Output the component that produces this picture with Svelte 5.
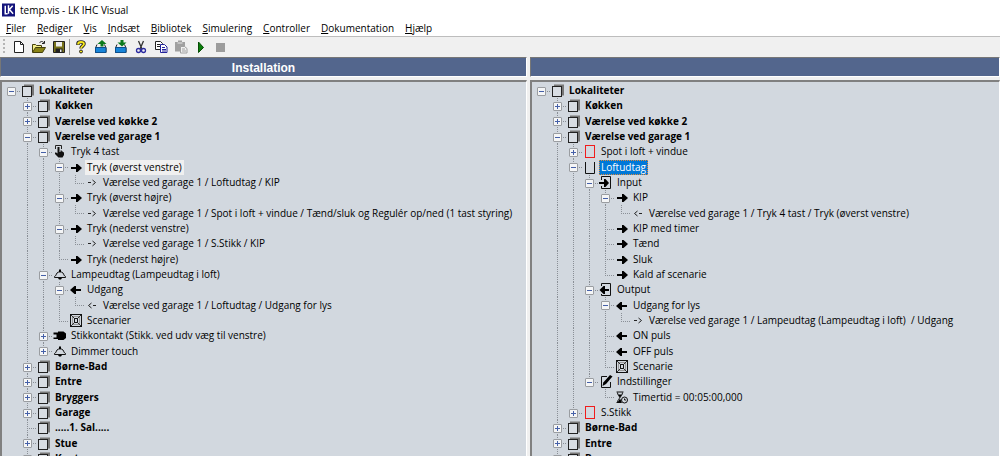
<script lang="ts">
  type TreeNode = {
    label: string;
    icon: string;
    closed?: boolean;
    mark?: 'linked' | 'selected';
    children?: TreeNode[];
  };

  type Row = TreeNode & { depth: number; guides: boolean[]; last: boolean };

  const menus = [
    'Filer',
    'Rediger',
    'Vis',
    'Indsæt',
    'Bibliotek',
    'Simulering',
    'Controller',
    'Dokumentation',
    'Hjælp',
  ];

  const tools = ['new', 'open', 'save', '|', 'help', 'upload', 'download', 'cut', 'copy', 'paste', 'play', 'stop'];

  const room = (label: string, children?: TreeNode[]): TreeNode => ({
    label,
    icon: 'room',
    closed: !children,
    children,
  });

  const installation: TreeNode = room('Lokaliteter', [
    room('Køkken'),
    room('Værelse ved køkke 2'),
    room('Værelse ved garage 1', [
      {
        label: 'Tryk 4 tast',
        icon: 'hand',
        children: [
          {
            label: 'Tryk (øverst venstre)',
            icon: 'right',
            mark: 'linked',
            children: [{ label: 'Værelse ved garage 1 / Loftudtag / KIP', icon: 'linkRight' }],
          },
          {
            label: 'Tryk (øverst højre)',
            icon: 'right',
            children: [
              {
                label: 'Værelse ved garage 1 / Spot i loft + vindue / Tænd/sluk og Regulér op/ned (1 tast styring)',
                icon: 'linkRight',
              },
            ],
          },
          {
            label: 'Tryk (nederst venstre)',
            icon: 'right',
            children: [{ label: 'Værelse ved garage 1 / S.Stikk / KIP', icon: 'linkRight' }],
          },
          { label: 'Tryk (nederst højre)', icon: 'right' },
        ],
      },
      {
        label: 'Lampeudtag (Lampeudtag i loft)',
        icon: 'lamp',
        children: [
          {
            label: 'Udgang',
            icon: 'left',
            children: [{ label: 'Værelse ved garage 1 / Loftudtag / Udgang for lys', icon: 'linkLeft' }],
          },
          { label: 'Scenarier', icon: 'scene' },
        ],
      },
      { label: 'Stikkontakt (Stikk. ved udv væg til venstre)', icon: 'plug', closed: true },
      { label: 'Dimmer touch', icon: 'lamp', closed: true },
    ]),
    room('Børne-Bad'),
    room('Entre'),
    room('Bryggers'),
    room('Garage'),
    { label: '.....1. Sal.....', icon: 'room' },
    room('Stue'),
    room('Kontor'),
  ]);

  const functions: TreeNode = room('Lokaliteter', [
    room('Køkken'),
    room('Værelse ved køkke 2'),
    room('Værelse ved garage 1', [
      { label: 'Spot i loft + vindue', icon: 'block', closed: true },
      {
        label: 'Loftudtag',
        icon: 'openBlock',
        mark: 'selected',
        children: [
          {
            label: 'Input',
            icon: 'input',
            children: [
              {
                label: 'KIP',
                icon: 'right',
                children: [
                  { label: 'Værelse ved garage 1 / Tryk 4 tast / Tryk (øverst venstre)', icon: 'linkLeft' },
                ],
              },
              { label: 'KIP med timer', icon: 'right' },
              { label: 'Tænd', icon: 'right' },
              { label: 'Sluk', icon: 'right' },
              { label: 'Kald af scenarie', icon: 'right' },
            ],
          },
          {
            label: 'Output',
            icon: 'output',
            children: [
              {
                label: 'Udgang for lys',
                icon: 'left',
                children: [
                  {
                    label: 'Værelse ved garage 1 / Lampeudtag (Lampeudtag i loft)  / Udgang',
                    icon: 'linkRight',
                  },
                ],
              },
              { label: 'ON puls', icon: 'left' },
              { label: 'OFF puls', icon: 'left' },
              { label: 'Scenarie', icon: 'scene' },
            ],
          },
          {
            label: 'Indstillinger',
            icon: 'settings',
            children: [{ label: 'Timertid = 00:05:00,000', icon: 'timer' }],
          },
        ],
      },
      { label: 'S.Stikk', icon: 'block', closed: true },
    ]),
    room('Børne-Bad'),
    room('Entre'),
    room('Bryggers'),
  ]);

  // Flatten the tree to rows; guides[i] tells if the line in column i runs on below
  const flatten = (node: TreeNode, depth = 0, guides: boolean[] = [], last = true): Row[] => {
    const rows: Row[] = [{ ...node, depth, guides, last }];
    const kids = node.children ?? [];
    kids.forEach((kid, i) => {
      rows.push(...flatten(kid, depth + 1, [...guides, !last], i === kids.length - 1));
    });
    return rows;
  };

  const panes = [
    { title: 'Installation', rows: flatten(installation) },
    { title: '', rows: flatten(functions) },
  ];
</script>

{#snippet treeIcon(name: string)}
  <svg class="icon" viewBox="0 0 16 15" aria-hidden="true">
    {#if name === 'room'}
      <path d="M4 1.500h10v11h-2V4H4z" fill="#777" />
      <rect x="2.500" y="3.500" width="9" height="10" fill="#d8dde3" stroke="#222" />
    {:else if name === 'hand'}
      <path d="M3.500 5V1.500h6V5" fill="none" stroke="#222" />
      <path d="M5.500 3h2v5h1V6.500h1.300v1h1.200v.7h1V11l-1.500 2.500h-4L3 10V8.500h1.200l1.300 1z" fill="#111" />
    {:else if name === 'right'}
      <path d="M3 7h5V4h1.500L14 8l-4.500 4H8V9H3z" />
    {:else if name === 'left'}
      <path d="M13 7H8V4H6.500L2 8l4.500 4H8V9h5z" />
    {:else if name === 'linkRight'}
      <path d="M4 7.500h3M8.500 5l3 2.500-3 2.500" fill="none" stroke="#222" />
    {:else if name === 'linkLeft'}
      <path d="M12 7.500H9M7.500 5l-3 2.500 3 2.500" fill="none" stroke="#222" />
    {:else if name === 'lamp'}
      <path d="M2.500 10.500V9.500C4 9 4 7.500 5 6c1.200-1.500 4.800-1.500 6 0 1 1.500 1 3 2.500 3.500v1z" fill="none" stroke="#111" />
      <path d="M7 2.500h2V5H7zM6 11h4l-1 1.500H7z" />
    {:else if name === 'plug'}
      <path d="M6 3.500h5.500L14 5.500v4.500l-2.500 2H6v-1H4.500V4.500H6zM1.500 4.500H5V6.500H1.500zM1.500 9.500H5V11H1.500z" />
    {:else if name === 'scene'}
      <rect x="2.500" y="1.500" width="11" height="12" fill="none" stroke="#111" />
      <rect x="4.500" y="3.500" width="7" height="8" fill="none" stroke="#999" />
      <rect x="6.500" y="5.500" width="3" height="4" fill="none" stroke="#111" />
      <path d="M3 2l3.500 3.500M13 2L9.500 5.500M3 13l3.500-3.500M13 13L9.500 9.500" stroke="#333" />
    {:else if name === 'block'}
      <rect x="3.500" y="1.500" width="9" height="12" fill="none" stroke="#f01c1c" />
    {:else if name === 'openBlock'}
      <path d="M3.500 2v11.500h9V2" fill="none" stroke="#111" />
    {:else if name === 'input'}
      <path d="M3.500 5V1.500h9v12h-9V11" fill="none" stroke="#111" />
      <path d="M1 7h5V4h1.500L11 8l-3.500 4H6V9H1z" />
    {:else if name === 'output'}
      <path d="M3.500 4V1.500h9v12h-9V12" fill="none" stroke="#111" />
      <path d="M11 7H7V4H5.500L1.500 8l4 4H7V9h4z" />
    {:else if name === 'settings'}
      <path d="M9 2.500H3.500v11h9V8" fill="none" stroke="#111" />
      <path d="M12 1l2.500 1.500L8 10l-3.500 2 .8-3.500z" />
    {:else if name === 'timer'}
      <path d="M2.500 2h7M2.500 12.500h5M3.500 2.500c0 3 2 3 2 5s-2 2-2 5M8.500 2.500c0 3-2 3-2 5" fill="none" stroke="#111" />
      <path d="M4 4.500h4L6 7.500zM6 8.500l2 4H3.500z" />
      <circle cx="10.500" cy="10" r="3" fill="#d2d8df" stroke="#111" />
      <path d="M10.500 8.500V10h1.500" fill="none" stroke="#111" />
    {/if}
  </svg>
{/snippet}

{#snippet toolIcon(name: string)}
  <svg class="tool-icon" viewBox="0 0 16 16" aria-hidden="true">
    {#if name === 'new'}
      <path d="M3.500 2.500h6l3 3v8h-9z" fill="#fff" stroke="#222" />
      <path d="M9.500 2.500v3h3" fill="none" stroke="#222" />
    {:else if name === 'open'}
      <path d="M1.500 13V5.500h3l1 1h5V9" fill="#f3ee8a" stroke="#44400c" />
      <path d="M1.500 13.500l3-5h10l-3 5z" fill="#8a8416" stroke="#44400c" />
      <path d="M8.500 4c1-2 3.500-2 4.500 0M13.500 2v2.500H11" fill="none" stroke="#222" />
    {:else if name === 'save'}
      <path d="M2.500 2.500h11v11h-11z" fill="#77721a" stroke="#222" />
      <path d="M5 3h6v4.500H5z" fill="#eee" />
      <path d="M4.500 9.500h7V13h-7z" fill="#222" />
      <path d="M9 10.500h1.500V13H9z" fill="#eee" />
    {:else if name === 'help'}
      <path d="M5 6V4.500C5 3 6.500 3 8 3s3 .5 3 2-3 2.500-3 4.500" fill="none" stroke="#222" stroke-width="3.500" />
      <path d="M5 5.500C5 3.500 6.500 3 8 3s3 .5 3 2-3 2.500-3 4.500" fill="none" stroke="#f4e51b" stroke-width="1.800" />
      <circle cx="8" cy="12.500" r="1.500" fill="#f4e51b" stroke="#222" />
    {:else if name === 'upload' || name === 'download'}
      <path d="M4 5.500L2.500 9v4.500h10.500V9L11.500 5.500" fill="none" stroke="#222" />
      <path d="M2.500 8.500h10.500v5H2.500z" fill="#1684d8" stroke="#0d4f8c" />
      {#if name === 'upload'}
        <path d="M9 1l4.500 4h-3v2.500h-3V5h-3z" fill="#0b7a1d" />
      {:else}
        <path d="M7.500 1h3v2.500h3L9 7.500l-4.500-4h3z" fill="#0b7a1d" />
      {/if}
    {:else if name === 'cut'}
      <path d="M5.500 2l3.500 8M10.500 2L7 10" stroke="#333" stroke-width="1.300" />
      <circle cx="5.500" cy="11.500" r="2" fill="none" stroke="#2c2ca0" stroke-width="1.300" />
      <circle cx="10.500" cy="11.500" r="2" fill="none" stroke="#2c2ca0" stroke-width="1.300" />
    {:else if name === 'copy'}
      <path d="M2.500 2.500h5l2 2v6h-7z" fill="#fff" stroke="#222" />
      <path d="M4 5.500h3M4 7.500h3" stroke="#222" />
      <path d="M7.500 5.500h4l2.500 2.500v5.500H7.500z" fill="#fff" stroke="#22229a" />
      <path d="M9 8.500h3M9 10.500h4M9 12h4" stroke="#22229a" />
    {:else if name === 'paste'}
      <path d="M2 3h3V1.500h4V3h3v9.500H2z" fill="#a0a0a0" />
      <path d="M4.500 4h5" stroke="#e6e6e6" />
      <path d="M7.500 7.500h4l2.500 2v4.500H7.500z" fill="#f0f0f0" stroke="#a0a0a0" />
      <path d="M9 10h3M9 12h4" stroke="#a0a0a0" />
    {:else if name === 'play'}
      <path d="M5.500 3l5 5.500-5 5z" fill="#0a7d0a" stroke="#064d06" />
    {:else if name === 'stop'}
      <path d="M3 4h9v9H3z" fill="#9c9c9c" />
    {/if}
  </svg>
{/snippet}

<div class="window">
  <header class="titlebar">
    <svg class="logo" viewBox="0 0 14 14" aria-hidden="true">
      <rect width="14" height="14" fill="#14147c" />
      <path d="M3.500 2.500v8.500H6M7 2v9M11.500 2.500L8 6.500l4 4.500" fill="none" stroke="#fff" stroke-width="1.600" />
    </svg>
    <span>temp.vis - LK IHC Visual</span>
  </header>

  <nav class="menubar">
    {#each menus as menu}
      <button class="menu"><u>{menu[0]}</u>{menu.slice(1)}</button>
    {/each}
  </nav>

  <div class="toolbar">
    <span class="grip"></span>
    {#each tools as tool}
      {#if tool === '|'}
        <span class="separator"></span>
      {:else}
        <button class="tool" aria-label={tool} disabled={tool === 'paste' || tool === 'stop'}>
          {@render toolIcon(tool)}
        </button>
      {/if}
    {/each}
  </div>

  <main class="panes">
    {#each panes as pane}
      <section class="pane">
        <h2 class="pane-title">{pane.title}</h2>
        <div class="tree" role="tree">
          {#each pane.rows as row}
            <div class="row" role="treeitem" aria-selected={row.mark === 'selected'}>
              {#each row.guides as on}
                <span class="cell" class:through={on}></span>
              {/each}
              <span class="cell branch" class:through={!row.last} class:elbow={row.last && row.depth > 0}>
                {#if row.children || row.closed}
                  <button class="expander" class:plus={row.closed} aria-label={row.closed ? 'Fold ud' : 'Fold ind'}
                  ></button>
                {/if}
              </span>
              {@render treeIcon(row.icon)}
              <span class="label {row.mark ?? ''}" class:bold={row.icon === 'room'}>{row.label}</span>
            </div>
          {/each}
        </div>
      </section>
    {/each}
  </main>
</div>

<style>
  :global(body) {
    margin: 0;
    background: #f0f0f0;
    font-family: 'Open Sans', 'Noto Sans', sans-serif;
    font-size: 10px;
    color: #000;
  }

  button {
    margin: 0;
    padding: 0;
    border: 0;
    background: none;
    font: inherit;
    color: inherit;
  }

  .window {
    display: flex;
    flex-direction: column;
    height: 100vh;
    overflow: hidden;
  }

  .titlebar {
    display: flex;
    align-items: center;
    gap: 5px;
    height: 20px;
    padding-left: 2px;
    background: #fff;
  }

  .logo {
    width: 13px;
    height: 14px;
  }

  .menubar {
    display: flex;
    align-items: center;
    gap: 11px;
    height: 16px;
    padding-left: 6px;
    background: #fff;
    border-bottom: 1px solid #bdbdbd;
  }

  .menu {
    line-height: 16px;
  }

  .toolbar {
    display: flex;
    align-items: center;
    height: 20px;
  }

  .grip {
    width: 2px;
    height: 16px;
    margin: 0 4px 0 3px;
    background: repeating-linear-gradient(#b5b5b5 0 2px, transparent 2px 4px);
  }

  .tool {
    display: grid;
    place-items: center;
    width: 20px;
    height: 20px;
  }

  .tool-icon {
    width: 16px;
    height: 16px;
  }

  .separator {
    width: 1px;
    height: 16px;
    margin-right: 1px;
    background: #999;
  }

  .panes {
    flex: 1;
    display: grid;
    grid-template-columns: 527fr 470fr;
    gap: 3px;
    min-height: 0;
  }

  .pane {
    display: flex;
    flex-direction: column;
    gap: 3px;
    min-width: 0;
    min-height: 0;
  }

  .pane-title {
    height: 18px;
    margin: 0;
    border: 1px solid #fff;
    border-top-color: #777;
    border-left-color: #777;
    background: #53668d;
    color: #fff;
    font: bold 12px/20px 'Liberation Sans', Arial, sans-serif;
    text-align: center;
  }

  .tree {
    flex: 1;
    min-height: 0;
    overflow: hidden;
    padding: 1px 0 0 2px;
    border: 2px solid #808080;
    border-right: 1px solid #fff;
    border-bottom: 0;
    background: #d2d8df;
  }

  .row {
    display: flex;
    align-items: center;
    height: 15px;
    white-space: pre;
  }

  .row:nth-child(3n) {
    height: 16px;
  }

  .cell {
    --dots: #8a8f96 0 1px, transparent 1px 2px;

    flex: none;
    display: flex;
    align-items: center;
    width: 16px;
    height: 100%;
    background-repeat: no-repeat;
  }

  .through {
    background-image: repeating-linear-gradient(var(--dots));
    background-size: 1px 100%;
    background-position: 7px 0;
  }

  .branch {
    background-image: repeating-linear-gradient(90deg, var(--dots));
    background-size: 10px 1px;
    background-position: 7px 8px;
  }

  .branch.through,
  .branch.elbow {
    background-image: repeating-linear-gradient(var(--dots)), repeating-linear-gradient(90deg, var(--dots));
    background-size: 1px 100%, 10px 1px;
    background-position: 7px 0, 7px 8px;
  }

  .branch.elbow {
    background-size: 1px 8px, 10px 1px;
  }

  .expander {
    --sign: #4560a8;

    width: 9px;
    height: 9px;
    margin: 1px 0 0 3px;
    border: 1px solid #9a9da1;
    border-radius: 1px;
    background: linear-gradient(var(--sign), var(--sign)) center / 5px 1px no-repeat #f4f5f6;
  }

  .expander.plus {
    background:
      linear-gradient(var(--sign), var(--sign)) center / 5px 1px no-repeat,
      linear-gradient(var(--sign), var(--sign)) center / 1px 5px no-repeat #f4f5f6;
  }

  .icon {
    flex: none;
    width: 16px;
    height: 15px;
  }

  .label {
    margin-left: 1px;
    padding: 0 2px;
    line-height: 15px;
  }

  .bold {
    font-weight: bold;
  }

  .linked {
    background: #f0f0f0;
  }

  .selected {
    background: #0078d7;
    color: #fff;
    outline: 1px dotted #e08a3a;
    outline-offset: -1px;
  }
</style>
